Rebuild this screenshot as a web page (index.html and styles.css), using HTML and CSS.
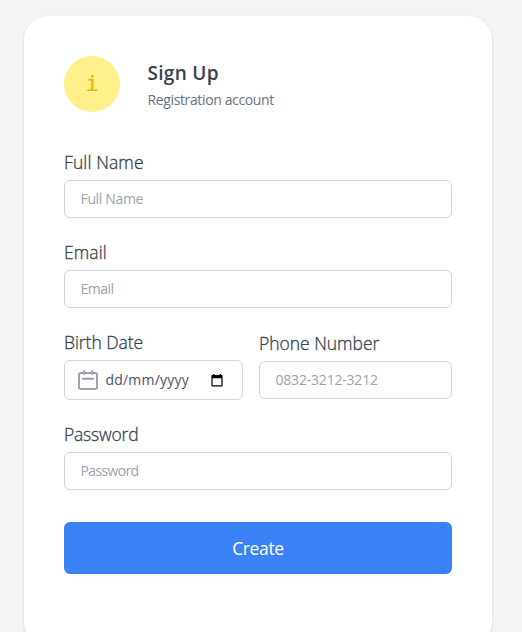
FILE: index.html
```html
<!DOCTYPE html>
<html lang="en">
<head>
<meta charset="utf-8">
<title>Sign Up</title>
<link rel="stylesheet" href="styles.css">
</head>
<body>
<main class="card">
  <header class="header">
    <div class="badge">i</div>
    <div class="heading">
      <h1>Sign Up</h1>
      <p>Registration account</p>
    </div>
  </header>
  <form class="form">
    <div class="field">
      <label for="name">Full Name</label>
      <input class="control" id="name" type="text" placeholder="Full Name">
    </div>
    <div class="field">
      <label for="email">Email</label>
      <input class="control i-email" id="email" type="text" placeholder="Email">
    </div>
    <div class="row">
      <div class="field birth">
        <label class="l-birth">Birth Date</label>
        <div class="control date">
          <svg class="calendar" width="20" height="20" viewBox="0 0 20 20" fill="none" stroke="#9ca3af" stroke-width="2" stroke-linecap="round">
            <rect x="1" y="3" width="18" height="16" rx="2"/>
            <path d="M6.3 1v3.2M14.3 1v3.2M5 8.8h10"/>
          </svg>
          <span class="date-text">dd/mm/yyyy</span>
          <svg class="picker" width="12" height="13" viewBox="0 0 12 13">
            <path fill="#000" fill-rule="evenodd" d="M2 0h1.3v1h5.4V0H10v1h.6q1 0 1 1v9.5q0 1-1 1H1.4q-1 0-1-1V2q0-1 1-1H2zM1.6 4.3v7h8.8v-7z"/>
          </svg>
        </div>
      </div>
      <div class="field phone">
        <label class="l-phone" for="phone">Phone Number</label>
        <input class="control i-phone" id="phone" type="text" placeholder="0832-3212-3212">
      </div>
    </div>
    <div class="field">
      <label class="l-password" for="password">Password</label>
      <input class="control i-password" id="password" type="password" placeholder="Password">
    </div>
    <button class="submit" type="button">Create</button>
  </form>
</main>
</body>
</html>
```
FILE: styles.css
```css
* { box-sizing: border-box; }
html { overflow: hidden; }
body {
  margin: 0;
  padding: 16px 30px 16px 24px;
  background: #f3f4f6;
  font-family: "Open Sans", "Noto Sans", sans-serif;
  color: #374151;
}
.card {
  height: 630px;
  padding: 40px;
  background: #fff;
  border-radius: 24px;
  box-shadow: 0 1px 3px rgba(0, 0, 0, .1), 0 1px 2px rgba(0, 0, 0, .06);
}
.header { display: flex; align-items: center; gap: 27.5px; height: 56px; }
.badge {
  display: flex;
  align-items: center;
  justify-content: center;
  width: 56px;
  height: 56px;
  border-radius: 50%;
  background: #fef08a;
  color: #eab308;
  font: 22px/32px "DejaVu Sans Mono", monospace;
  -webkit-text-stroke: .2px #eab308;
}
h1, p { margin: 0; }
h1 { font-size: 19px; line-height: 28px; font-weight: 600; padding-top: 1px; letter-spacing: .3px; }
p { font-size: 14px; line-height: 20px; color: #6b7280; padding-top: 3px; letter-spacing: -.37px; }
.form { display: flex; flex-direction: column; gap: 20px; margin-top: 36px; }
.field { display: flex; flex-direction: column; gap: 4px; min-width: 0; }
label {
  font-size: 17.5px;
  line-height: 28px;
  font-weight: 300;
  white-space: nowrap;
  letter-spacing: .12px;
  -webkit-text-stroke: .3px #374151;
}
.l-birth { letter-spacing: -.05px; }
.l-phone { letter-spacing: -.02px; }
.l-password { letter-spacing: -.2px; }
.control {
  width: 100%;
  height: 38px;
  padding: 0 16px 1px 15.5px;
  border: 1px solid #d1d5db;
  border-radius: 6px;
  background: #fff;
  font: 14px/20px "Open Sans", "Noto Sans", sans-serif;
  color: #4b5563;
  letter-spacing: -.35px;
}
.control::placeholder { color: #9ca3af; opacity: 1; }
.i-email { letter-spacing: -.5px; }
.i-phone { letter-spacing: -.2px; }
.i-password { letter-spacing: -.65px; }
.row { display: flex; align-items: center; gap: 16px; }
.birth { width: 179px; }
.phone { width: 193px; }
.date { display: flex; align-items: center; height: 40px; padding: 0 19px 0 13px; letter-spacing: .2px; }
.date-text { margin-left: 7.5px; }
.picker { margin-left: auto; }
.submit {
  height: 52px;
  margin-top: 12px;
  border: 0;
  border-radius: 6px;
  background: #3b82f6;
  color: #fff;
  font: 17.5px/28px "Open Sans", "Noto Sans", sans-serif;
  letter-spacing: -.35px;
}
```
